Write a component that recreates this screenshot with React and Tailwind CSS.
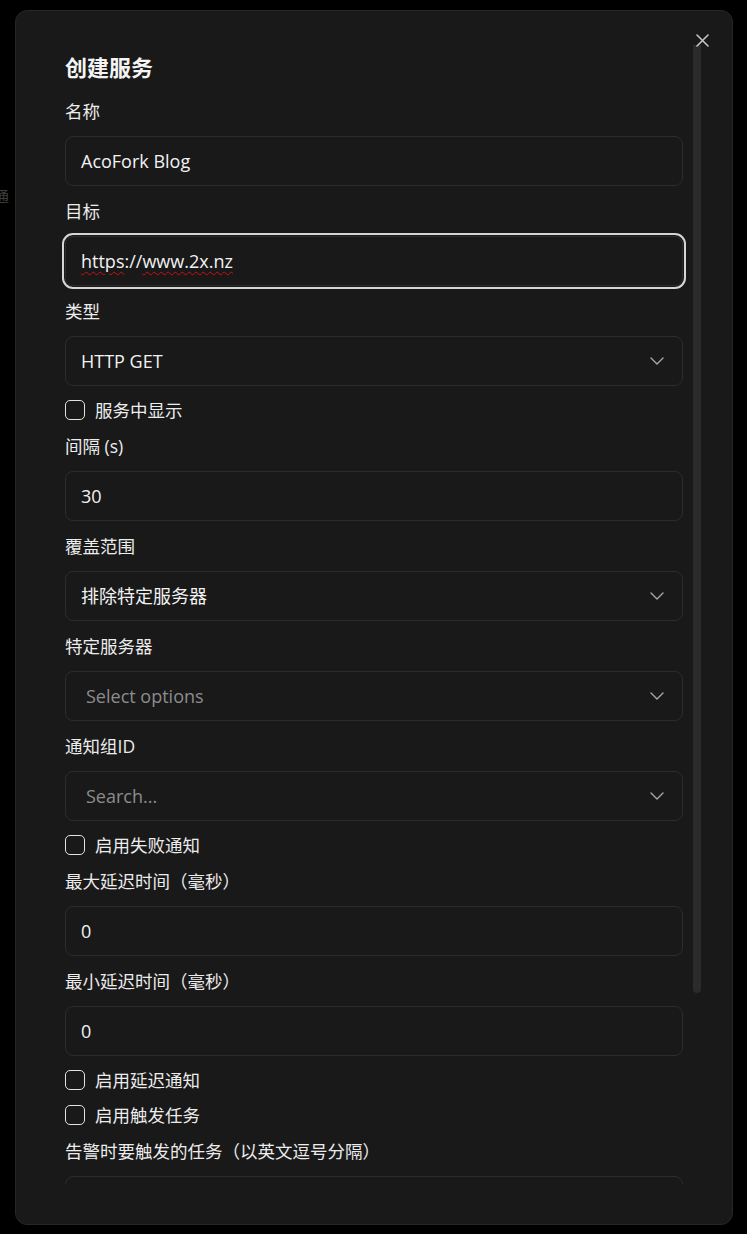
import { ChevronDown } from 'lucide-react';

const Label = ({ children }) => (
  <div className="text-[17.5px] leading-6 text-[#ececec]">{children}</div>
);

const TextInput = ({ children, focused }) => (
  <div
    className={
      'h-[50px] shrink-0 rounded-[8px] border border-[#2c2c2c] bg-[#191919] px-[15px] flex items-center text-[18px] text-[#f2f2f2] ' +
      (focused ? 'outline-[2.5px] outline-offset-[1.5px] outline-[#d6d6d6]' : '')
    }
  >
    {children}
  </div>
);

const SelectBox = ({ value, placeholder }) => (
  <div className="h-[50px] shrink-0 rounded-[8px] border border-[#2c2c2c] bg-[#191919] flex items-center justify-between pr-[13px] text-[18px]">
    {value ? (
      <span className="pl-[15px] text-[#f2f2f2]">{value}</span>
    ) : (
      <span className="pl-[20px] text-[#8c8c8c]">{placeholder}</span>
    )}
    <ChevronDown size={24} strokeWidth={1.4} className="text-[#a8a8a8]" />
  </div>
);

const Checkbox = ({ label }) => (
  <div className="h-[22px] flex items-center gap-[10px]">
    <div className="w-[20px] h-[20px] rounded-[5px] border-[1.5px] border-[#e2e2e2]" />
    <span className="text-[17.5px] text-[#ececec]">{label}</span>
  </div>
);

export default function App() {
  return (
    <div className="relative min-h-screen overflow-hidden bg-black font-['Open_Sans','Noto_Sans_CJK_SC',sans-serif]">
      {/* page behind the overlay */}
      <span className="absolute left-[-6px] top-[185px] text-[15px] text-[#3e3e3e]">通</span>

      <div className="relative pt-[10px] pl-[15px] w-[733px]">
        <div className="relative flex h-[1215px] w-[718px] rounded-[12px] border border-[#262626] bg-[#191919] pt-[34px] pb-[40px] pr-[31px]">
          <button className="absolute right-[23px] top-[23px] text-[#c4c4c4]">
            <svg width="13" height="13" viewBox="0 0 13 13" fill="none" stroke="currentColor" strokeWidth="1.6" strokeLinecap="round">
              <path d="M1 1l11 11M12 1L1 12" />
            </svg>
          </button>

          <div className="flex-1 overflow-hidden pl-[49px] pr-[10px]">
            <div className="flex flex-col gap-[13px] pt-[8px]">
              <h2 className="text-[22px] font-bold leading-[28px] mb-[5px] text-[#f4f4f4]">创建服务</h2>

              <Label>名称</Label>
              <TextInput>AcoFork Blog</TextInput>

              <Label>目标</Label>
              <TextInput focused>
                <span className="underline decoration-wavy decoration-[#d01010] decoration-1 underline-offset-[3px]">https</span>
                ://
                <span className="underline decoration-wavy decoration-[#d01010] decoration-1 underline-offset-[3px]">www.2x.nz</span>
              </TextInput>

              <Label>类型</Label>
              <SelectBox value="HTTP GET" />

              <Checkbox label="服务中显示" />

              <Label>间隔 (s)</Label>
              <TextInput>30</TextInput>

              <Label>覆盖范围</Label>
              <SelectBox value="排除特定服务器" />

              <Label>特定服务器</Label>
              <SelectBox placeholder="Select options" />

              <Label>通知组ID</Label>
              <SelectBox placeholder="Search..." />

              <Checkbox label="启用失败通知" />

              <Label>最大延迟时间（毫秒）</Label>
              <TextInput>0</TextInput>

              <Label>最小延迟时间（毫秒）</Label>
              <TextInput>0</TextInput>

              <Checkbox label="启用延迟通知" />
              <Checkbox label="启用触发任务" />

              <Label>告警时要触发的任务（以英文逗号分隔）</Label>
              <TextInput />
            </div>
          </div>

          <div className="w-[8px]">
            <div className="h-[948px] rounded-b-full rounded-t-[2px] bg-[#2b2b2b]" />
          </div>
        </div>
      </div>
    </div>
  );
}
